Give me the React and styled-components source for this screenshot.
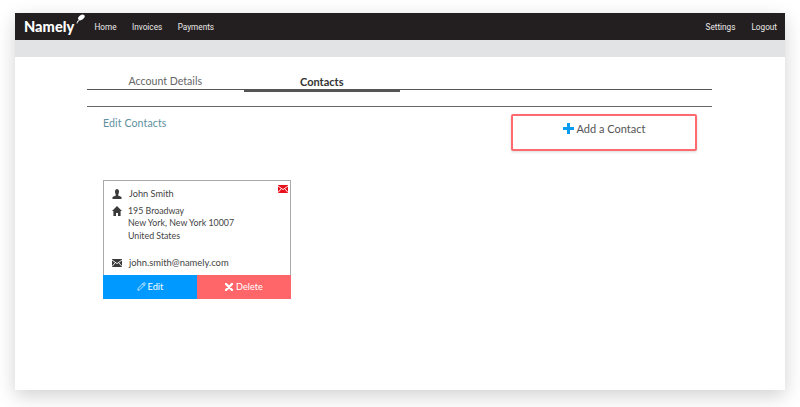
import React from "react";
import styled, { createGlobalStyle } from "styled-components";
import { Pencil } from "lucide-react";

const GlobalStyle = createGlobalStyle`
  html, body {
    margin: 0;
    padding: 0;
    background: #fff;
    font-family: "Lato", "Liberation Sans", sans-serif;
  }
`;

const Page = styled.div`
  width: 800px;
  height: 407px;
  padding: 13px 15px 17px;
  box-sizing: border-box;
  overflow: hidden;
`;

const Window = styled.div`
  height: 100%;
  background: #fff;
  box-shadow: 0 6px 18px rgba(0, 0, 0, 0.18);
`;

const Header = styled.header`
  display: flex;
  align-items: center;
  height: 27px;
  background: #231f20;
  padding: 0 8px 0 9px;
  font-family: "Roboto", sans-serif;
`;

const Logo = styled.div`
  display: flex;
  align-items: flex-start;
  width: 70.5px;
  color: #fff;
  font-family: "Lato", sans-serif;
  font-weight: 900;
  font-size: 14.6px;
  line-height: 29px;
`;

const LogoMark = styled.svg`
  width: 9px;
  height: 10px;
  margin: 2px 0 0 2px;
`;

const NavLink = styled.a`
  color: #eceaea;
  font-size: 8.2px;
  margin-right: ${(p) => p.$gap}px;
`;

const Spacer = styled.div`
  flex: 1;
`;

const SubBar = styled.div`
  height: 17px;
  background: #e1e3e4;
`;

const Content = styled.main`
  padding: 17px 73px 0 72px;
`;

const Tabs = styled.div`
  display: flex;
  height: 15px;
  border-bottom: 1px solid #555;
`;

const Tab = styled.div`
  width: 156.5px;
  height: 15px;
  text-align: center;
  font-size: ${(p) => (p.$active ? 11 : 10.6)}px;
  line-height: 15px;
  color: ${(p) => (p.$active ? "#333" : "#666")};
  font-weight: ${(p) => (p.$active ? 700 : 400)};
  border-bottom: ${(p) => (p.$active ? "3px solid #555" : "none")};
`;

const Rule = styled.hr`
  margin: 16px 0 0;
  border: 0;
  border-top: 1px solid #666;
`;

const ActionRow = styled.div`
  display: flex;
  justify-content: space-between;
  align-items: flex-start;
  padding: 7px 15px 0 16px;
`;

const EditTitle = styled.div`
  margin-top: 2px;
  font-size: 10.6px;
  line-height: 14px;
  color: #5f8fa0;
  letter-spacing: 0.1px;
`;

const AddButton = styled.button`
  display: flex;
  justify-content: center;
  align-items: flex-start;
  gap: 3px;
  width: 186px;
  height: 37px;
  padding: 6px 0 0;
  background: #fff;
  border: 2px solid #ff6a6e;
  border-radius: 2px;
  font-family: inherit;
  font-size: 11px;
  line-height: 14px;
  color: #555;
  box-shadow: 0 1px 3px rgba(0, 0, 0, 0.15);
`;

const PlusIcon = styled.svg`
  width: 11px;
  height: 11px;
  margin-top: 1px;
`;

const Card = styled.article`
  width: 188px;
  margin: 29px 0 0 16px;
`;

const CardBody = styled.div`
  position: relative;
  height: 95px;
  box-sizing: border-box;
  border: 1px solid #aaa;
  border-bottom: 0;
  padding: 7px 0 0 8px;
  color: #444;
`;

const MailBadge = styled.div`
  position: absolute;
  top: 4px;
  right: 2px;
  line-height: 0;
`;

const InfoRow = styled.div`
  display: grid;
  grid-template-columns: ${(p) => p.$col || 16}px 1fr;
  align-items: start;
  margin-top: ${(p) => p.$gap || 0}px;
  font-size: ${(p) => p.$size || 9.2}px;
  line-height: 12.5px;
`;

const RowIcon = styled.svg`
  width: 10px;
  height: 10px;
  margin-top: 1px;
  fill: #3a3a3a;
`;

const MailSvg = styled.svg`
  width: 10px;
  height: 8px;
  margin-top: ${(p) => p.$top || 0}px;
`;

const CardActions = styled.div`
  display: flex;
  height: 24px;
`;

const CardButton = styled.button`
  display: flex;
  flex: 1;
  align-items: center;
  justify-content: center;
  gap: 2px;
  border: 0;
  padding: 0 0 1px;
  color: #fff;
  font-family: inherit;
  font-size: 9.2px;
  background: ${(p) => p.$bg};
`;

const CrossIcon = styled.svg`
  width: 8px;
  height: 8px;
  margin-right: 1px;
`;

const MailIcon = ({ color, top }) => (
  <MailSvg viewBox="0 0 10 8" $top={top}>
    <rect width="10" height="8" fill={color} />
    <path d="M0 1 L5 4.6 L10 1 M0 7.5 L3.4 3.6 M10 7.5 L6.6 3.6" fill="none" stroke="#fff" strokeWidth="0.9" />
  </MailSvg>
);

const App = () => (
  <Page>
    <GlobalStyle />
    <Window>
      <Header>
        <Logo>
          Namely
          <LogoMark viewBox="0 0 9 10">
            <ellipse cx="5.4" cy="3.4" rx="3.6" ry="2.4" transform="rotate(-35 5.4 3.4)" fill="#fff" />
            <path d="M0.6 9.4 C0.8 7.6 1.6 6.6 3 6 L3.6 6.8 C2.4 7.4 1.6 8.2 1.4 9.6 Z" fill="#fff" />
          </LogoMark>
        </Logo>
        <NavLink $gap={15.5}>Home</NavLink>
        <NavLink $gap={15.5}>Invoices</NavLink>
        <NavLink>Payments</NavLink>
        <Spacer />
        <NavLink $gap={16}>Settings</NavLink>
        <NavLink>Logout</NavLink>
      </Header>
      <SubBar />
      <Content>
        <Tabs>
          <Tab>Account Details</Tab>
          <Tab $active>Contacts</Tab>
        </Tabs>
        <Rule />
        <ActionRow>
          <EditTitle>Edit Contacts</EditTitle>
          <AddButton>
            <PlusIcon viewBox="0 0 11 11">
              <path d="M4 0 H7 V4 H11 V7 H7 V11 H4 V7 H0 V4 H4 Z" fill="#0a9bf0" />
            </PlusIcon>
            Add a Contact
          </AddButton>
        </ActionRow>
        <Card>
          <CardBody>
            <MailBadge>
              <MailIcon color="#e8121c" />
            </MailBadge>
            <InfoRow $col={17}>
              <RowIcon viewBox="0 0 10 10">
                <path d="M3 2.5 C3 1 4 0 5 0 C6 0 7 1 7 2.5 C7 4 6.4 5 6.2 5.6 L6.2 6.4 L9.5 8 V10 H0.5 V8 L3.8 6.4 V5.6 C3.6 5 3 4 3 2.5 Z" />
              </RowIcon>
              John Smith
            </InfoRow>
            <InfoRow $gap={4} $size={8.8}>
              <RowIcon viewBox="0 0 10 10">
                <path d="M5 0 L10 5 H8.6 V10 H6 V7 H4 V10 H1.4 V5 H0 Z" />
              </RowIcon>
              <div>
                195 Broadway
                <br />
                New York, New York 10007
                <br />
                United States
              </div>
            </InfoRow>
            <InfoRow $gap={15} $col={17} $size={9.4}>
              <MailIcon color="#3a3a3a" top={2} />
              john.smith@namely.com
            </InfoRow>
          </CardBody>
          <CardActions>
            <CardButton $bg="#0099ff">
              <Pencil size={9} />
              Edit
            </CardButton>
            <CardButton $bg="#ff6669">
              <CrossIcon viewBox="0 0 8 8">
                <path d="M1 1 L7 7 M7 1 L1 7" stroke="#fff" strokeWidth="2.4" strokeLinecap="round" />
              </CrossIcon>
              Delete
            </CardButton>
          </CardActions>
        </Card>
      </Content>
    </Window>
  </Page>
);

export default App;
